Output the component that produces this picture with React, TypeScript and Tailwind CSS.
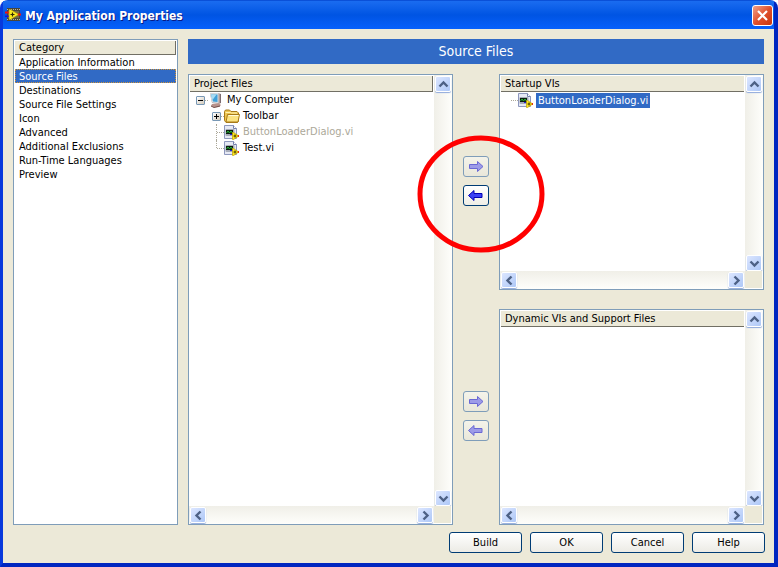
import type { ReactNode } from "react";

type Direction = "up" | "down" | "left" | "right";

const categories = [
  "Application Information",
  "Source Files",
  "Destinations",
  "Source File Settings",
  "Icon",
  "Advanced",
  "Additional Exclusions",
  "Run-Time Languages",
  "Preview",
];

const chevrons: Record<Direction, string> = {
  up: "M3.5 9.5 7.5 5.5 11.5 9.5",
  down: "M3.5 5.5 7.5 9.5 11.5 5.5",
  left: "M9.5 3.5 5.5 7.5 9.5 11.5",
  right: "M5.5 3.5 9.5 7.5 5.5 11.5",
};

function AppIcon() {
  return (
    <svg width="16" height="16" viewBox="0 0 16 16" className="shrink-0" aria-hidden="true">
      <rect x="2" y="1" width="13" height="13" fill="#4a473a" />
      <path d="M2 2.500h13M2 12.500h13" stroke="#b8b49c" strokeDasharray="1 1" />
      <rect x="3" y="4" width="11" height="7" fill="#6e6a4c" />
      <path d="M0 4.500h4v2H0zM12 6.500h4v2h-4z" fill="#f01010" />
      <path d="M0 8.500h4v1.500H0z" fill="#1010e8" />
      <path d="M4 2.500h1.500L13 7v1l-7.500 4.500H4z" fill="#f8e820" stroke="#a89000" strokeWidth=".6" />
      <path d="M5.500 7.500h4M7.500 5.500v4" stroke="#302800" strokeWidth="1.200" />
    </svg>
  );
}

function ComputerIcon() {
  return (
    <svg width="16" height="16" viewBox="0 0 16 16" className="shrink-0" aria-hidden="true">
      <path d="M2 1.500 10.500 1 13 2v9l-2 1-7-1z" fill="#b09c98" />
      <path d="M2 1.500 10.500 1v10L4 10.500z" fill="#d5e0e8" />
      <path d="M3 2.500h6.500V10L5 9.500z" fill="#3fa0d8" />
      <path d="M3 2.500h5.500L4.500 8z" fill="#a6dcf4" />
      <path d="M4 12l7-.5 2 1.500-2 2-5 .5-3-1.500z" fill="#b8928c" />
      <path d="M3 14 6 15.500 12 14" stroke="#74504c" fill="none" />
      <path d="M12.500 2v9" stroke="#7c6c70" />
    </svg>
  );
}

function FolderIcon() {
  return (
    <svg width="16" height="16" viewBox="0 0 16 16" className="shrink-0" aria-hidden="true">
      <path d="M.5 12.500V3.500l1-1.500h4l1.500 1.500h6l1.500 1.500v8l-1 1.500h-11.500z" fill="#edc550" stroke="#a87a18" />
      <path d="M1.500 4.500h5l1 .500h5.500" stroke="#fff3b0" fill="none" />
      <path d="M2 14 3.500 6.500h12L14 14z" fill="#fbe382" stroke="#a87a18" strokeLinejoin="round" />
      <path d="M4.500 7.500h10" stroke="#fffbd8" />
    </svg>
  );
}

function ViIcon() {
  return (
    <svg width="16" height="16" viewBox="0 0 16 16" className="shrink-0" aria-hidden="true">
      <path d="M.5 1.500h9l3 3v10H.5z" fill="#e6e9f4" stroke="#8d97bd" />
      <path d="M9.500 1.500v3h3" fill="#fff" stroke="#7580ac" />
      <rect x="1.500" y="5" width="9" height="7" rx="1" fill="#a6abb8" />
      <rect x="2" y="6" width="7" height="4" fill="#0c1c10" />
      <path d="M2.500 9 4 7 5.500 9 7 7 8.500 9" stroke="#28b838" fill="none" />
      <path d="M6 10.500h3" stroke="#2020d8" />
      <path d="M13 11h2v2h-2z" fill="#f01818" />
      <path d="M8.500 8.500h1L14 11.500v1L9.500 15.500h-1z" fill="#ffe91c" stroke="#c0a000" strokeWidth=".7" />
      <path d="M9.500 12h3M11 10.500v3" stroke="#403800" />
    </svg>
  );
}

function Expander({ open }: { open: boolean }) {
  return (
    <button
      type="button"
      aria-label={open ? "Collapse" : "Expand"}
      aria-expanded={open}
      className="size-[9px] shrink-0 rounded-[1px] border border-[#7898b5] bg-linear-to-br from-white to-[#d2cabb]"
    >
      <svg width="7" height="7" viewBox="0 0 7 7" shapeRendering="crispEdges" className="block" aria-hidden="true">
        <path d={open ? "M1 3h5v1H1z" : "M1 3h5v1H1zM3 1h1v5H3z"} fill="#000" />
      </svg>
    </button>
  );
}

function ScrollButton({ direction }: { direction: Direction }) {
  return (
    <button
      type="button"
      aria-label={"Scroll " + direction}
      className="flex size-4 shrink-0 items-center justify-center rounded-xs border border-white bg-linear-to-br from-[#dce6ff] to-[#aec8f7] shadow-[0_1px_1px_#8fa9dc]"
    >
      <svg width="15" height="15" viewBox="0 0 15 15" className="shrink-0" aria-hidden="true">
        <path d={chevrons[direction]} fill="none" stroke="#4d6185" strokeWidth="2.400" />
      </svg>
    </button>
  );
}

function ListPanel({ title, headerEdge, children }: { title: string; headerEdge?: boolean; children?: ReactNode }) {
  return (
    <section className="flex min-h-0 min-w-0 flex-col border border-[#7f9db9] bg-white">
      <div className="flex min-h-0 flex-1">
        <div className="min-w-0 flex-1 pt-px pl-px">
          <h2
            className={
              "mr-px h-4 border-b border-b-[#716f64] bg-[#ece9d8] pl-1 leading-[15px] " +
              (headerEdge ? "border-r border-r-[#716f64]" : "")
            }
          >
            {title}
          </h2>
          {children}
        </div>
        <div className="flex w-[18px] flex-col items-center justify-between bg-linear-to-r from-[#f0efe8] to-[#fefefb] pt-px">
          <ScrollButton direction="up" />
          <ScrollButton direction="down" />
        </div>
      </div>
      <div className="flex h-[18px] shrink-0">
        <div className="flex min-w-0 flex-1 items-center justify-between bg-linear-to-b from-[#f0efe8] to-[#fefefb] px-px">
          <ScrollButton direction="left" />
          <ScrollButton direction="right" />
        </div>
        <div className="w-[18px] border-r border-b border-white bg-[#ece9d8]" />
      </div>
    </section>
  );
}

function TransferButton({ back, disabled, label }: { back?: boolean; disabled?: boolean; label: string }) {
  return (
    <button
      type="button"
      aria-label={label}
      disabled={disabled}
      className={
        "flex h-[21px] w-[26px] items-center justify-center rounded-[3px] border " +
        (disabled
          ? "border-[#7f9db9] bg-linear-to-b from-[#f4f3ea] to-[#e9e7da]"
          : "border-[#003c74] bg-linear-to-b from-white to-[#efeee6]")
      }
    >
      <svg width="16" height="13" viewBox="0 0 16 13" aria-hidden="true">
        <path
          d={back ? "M.5 6.500 6 1.500v3h8v4H6v3z" : "M15 6.500 9.500 1.500v3h-8v4h8v3z"}
          fill={disabled ? "#9d9be8" : "#3a40f4"}
          stroke={disabled ? "#6a68d4" : "#0000b4"}
        />
      </svg>
    </button>
  );
}

function TransferGroup({ target, canRemove }: { target: string; canRemove?: boolean }) {
  return (
    <div className="flex flex-col gap-2 pt-[82px]">
      <TransferButton label={"Add to " + target} disabled />
      <TransferButton label={"Remove from " + target} back disabled={!canRemove} />
    </div>
  );
}

export default function App() {
  return (
    <div className="relative flex h-screen flex-col rounded-t-lg border-t border-r-4 border-b-4 border-l-3 border-t-[#0a50d8] border-r-[#0026c0] border-b-[#0026c0] border-l-[#0839dc] bg-[#ece9d8] font-['DejaVu_Sans_Condensed',Tahoma,sans-serif] text-[11px] leading-[14px] text-black">
      <header className="flex h-7 shrink-0 items-center gap-1 bg-linear-to-b from-[#1a6cf0] via-[#0054e3] to-[#0660fc] pr-px pl-[2px]">
        <AppIcon />
        <h1 className="flex-1 pt-[2px] text-[12px] font-bold text-white [text-shadow:1px_1px_#0a1883]">
          My Application Properties
        </h1>
        <button
          type="button"
          aria-label="Close"
          className="flex size-[21px] items-center justify-center rounded-[3px] border border-white bg-linear-to-br from-[#f0a088] via-[#e0502c] to-[#c83408]"
        >
          <svg width="13" height="13" viewBox="0 0 13 13" aria-hidden="true">
            <path d="M2 2 11 11M11 2 2 11" stroke="#fff" strokeWidth="2.200" />
          </svg>
        </button>
      </header>

      <main className="flex min-h-0 flex-1 gap-[10px] px-[10px] pt-[10px]">
        <nav aria-labelledby="category-heading" className="w-[165px] shrink-0 border border-[#7f9db9] bg-white p-px">
          <h2
            id="category-heading"
            className="h-[14px] border-r border-b border-[#716f64] bg-[#ece9d8] pl-1 leading-[14px]"
          >
            Category
          </h2>
          <ul>
            {categories.map((name) => {
              const active = name === "Source Files";
              return (
                <li key={name}>
                  <button
                    type="button"
                    aria-current={active ? "page" : undefined}
                    className={
                      "block h-[14px] w-full pl-1 text-left leading-[13px] whitespace-nowrap " +
                      (active ? "bg-[#316ac5] text-white outline-1 -outline-offset-1 outline-dotted outline-[#ce953a]" : "")
                    }
                  >
                    {name}
                  </button>
                </li>
              );
            })}
          </ul>
        </nav>

        <div className="flex min-w-0 flex-1 flex-col gap-[10px]">
          <h2 className="h-[25px] shrink-0 bg-[#316ac5] text-center text-[14px] leading-6 text-white">Source Files</h2>

          <div className="flex min-h-0 flex-1 gap-[10px]">
            <div className="grid min-w-0 flex-1">
              <ListPanel title="Project Files" headerEdge>
                <ul className="pl-[6px]">
                  <li>
                    <div className="flex h-4 items-center">
                      <Expander open />
                      <span className="w-[3px] border-t border-dotted border-[#aca899]" />
                      <ComputerIcon />
                      <span className="pl-[3px]">My Computer</span>
                    </div>
                    <ul className="pl-4">
                      <li className="flex h-4 items-center">
                        <Expander open={false} />
                        <span className="w-[3px] border-t border-dotted border-[#aca899]" />
                        <FolderIcon />
                        <span className="pl-[3px]">Toolbar</span>
                      </li>
                      <li className="flex h-4 items-center pl-1">
                        <span className="h-4 border-l border-dotted border-[#aca899]" />
                        <span className="w-[7px] border-t border-dotted border-[#aca899]" />
                        <ViIcon />
                        <span className="pl-[3px] text-[#aca899]">ButtonLoaderDialog.vi</span>
                      </li>
                      <li className="flex h-4 items-center pl-1">
                        <span className="h-2 self-start border-l border-dotted border-[#aca899]" />
                        <span className="w-[7px] border-t border-dotted border-[#aca899]" />
                        <ViIcon />
                        <span className="pl-[3px]">Test.vi</span>
                      </li>
                    </ul>
                  </li>
                </ul>
              </ListPanel>
            </div>

            <div className="grid grid-rows-2 gap-[19px]">
              <TransferGroup target="Startup VIs" canRemove />
              <TransferGroup target="Dynamic VIs and Support Files" />
            </div>

            <div className="grid min-w-0 flex-1 grid-rows-2 gap-[19px]">
              <ListPanel title="Startup VIs">
                <ul className="pl-[10px]">
                  <li className="flex h-4 items-center">
                    <span className="w-[7px] border-t border-dotted border-[#aca899]" />
                    <ViIcon />
                    <span className="ml-[2px] bg-[#316ac5] px-[2px] leading-[15px] text-white">ButtonLoaderDialog.vi</span>
                  </li>
                </ul>
              </ListPanel>
              <ListPanel title="Dynamic VIs and Support Files" />
            </div>
          </div>
        </div>
      </main>

      <footer className="flex shrink-0 justify-end gap-2 pt-[7px] pr-[9px] pb-[10px]">
        {["Build", "OK", "Cancel", "Help"].map((label) => (
          <button
            key={label}
            type="button"
            className="h-[21px] w-[73px] rounded-[3px] border border-[#003c74] bg-linear-to-b from-white to-[#ecebe5]"
          >
            {label}
          </button>
        ))}
      </footer>

      <svg
        width="128"
        height="118"
        viewBox="0 0 128 118"
        className="pointer-events-none absolute top-[134px] left-[414px]"
        aria-hidden="true"
      >
        <ellipse cx="64" cy="59" rx="61" ry="56" fill="none" stroke="#f00" strokeWidth="5" />
      </svg>
    </div>
  );
}
